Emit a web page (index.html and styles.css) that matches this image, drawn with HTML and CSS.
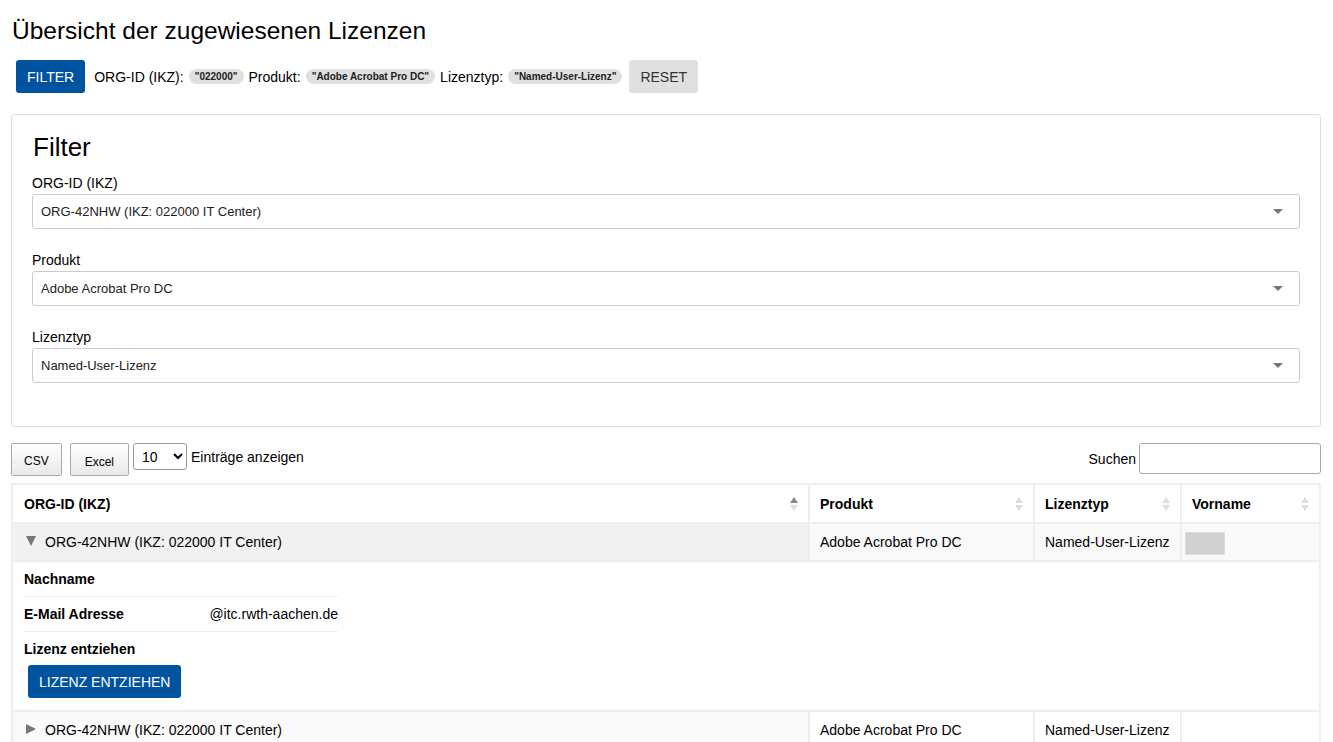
FILE: index.html
```html
<!DOCTYPE html>
<html lang="de">
<head>
    <meta charset="UTF-8">
    <meta name="viewport" content="width=device-width, initial-scale=1.0">
    <title>Übersicht der zugewiesenen Lizenzen</title>
    <link rel="stylesheet" href="styles.css">
</head>
<body>
    <div class="page">
        <h1>Übersicht der zugewiesenen Lizenzen</h1>

        <div class="filter-bar">
            <button class="btn btn-primary">FILTER</button>
            <span class="filter-label">ORG-ID (IKZ):</span>
            <span class="pill">"022000"</span>
            <span class="filter-label">Produkt:</span>
            <span class="pill">"Adobe Acrobat Pro DC"</span>
            <span class="filter-label">Lizenztyp:</span>
            <span class="pill">"Named-User-Lizenz"</span>
            <button class="btn btn-reset">RESET</button>
        </div>

        <div class="card">
            <h2>Filter</h2>
            <div class="form-group">
                <label>ORG-ID (IKZ)</label>
                <div class="select-box">
                    <span>ORG-42NHW (IKZ: 022000 IT Center)</span>
                    <span class="caret"></span>
                </div>
            </div>
            <div class="form-group">
                <label>Produkt</label>
                <div class="select-box">
                    <span>Adobe Acrobat Pro DC</span>
                    <span class="caret"></span>
                </div>
            </div>
            <div class="form-group">
                <label>Lizenztyp</label>
                <div class="select-box">
                    <span>Named-User-Lizenz</span>
                    <span class="caret"></span>
                </div>
            </div>
        </div>

        <div class="toolbar">
            <div class="toolbar-left">
                <button class="dt-button">CSV</button>
                <button class="dt-button">Excel</button>
                <select class="length-select">
                    <option>10</option>
                </select>
                <span class="length-label">Einträge anzeigen</span>
            </div>
            <div class="toolbar-right">
                <span>Suchen</span>
                <input type="text" class="search-input">
            </div>
        </div>

        <table class="licenses">
            <thead>
                <tr>
                    <th class="col-org sort-asc">ORG-ID (IKZ)<span class="sort"></span></th>
                    <th class="col-prod">Produkt<span class="sort"></span></th>
                    <th class="col-type">Lizenztyp<span class="sort"></span></th>
                    <th class="col-name">Vorname<span class="sort"></span></th>
                </tr>
            </thead>
            <tbody>
                <tr class="odd shown">
                    <td class="sorted"><span class="toggle open"></span>ORG-42NHW (IKZ: 022000 IT Center)</td>
                    <td>Adobe Acrobat Pro DC</td>
                    <td>Named-User-Lizenz</td>
                    <td><span class="name-mask"></span></td>
                </tr>
                <tr class="child">
                    <td colspan="4">
                        <table class="details">
                            <tr>
                                <th>Nachname</th>
                                <td></td>
                            </tr>
                            <tr>
                                <th>E-Mail Adresse</th>
                                <td>@itc.rwth-aachen.de</td>
                            </tr>
                            <tr class="last">
                                <th colspan="2">Lizenz entziehen</th>
                            </tr>
                        </table>
                        <button class="btn btn-primary btn-revoke">LIZENZ ENTZIEHEN</button>
                    </td>
                </tr>
                <tr class="even">
                    <td class="sorted"><span class="toggle"></span>ORG-42NHW (IKZ: 022000 IT Center)</td>
                    <td>Adobe Acrobat Pro DC</td>
                    <td>Named-User-Lizenz</td>
                    <td></td>
                </tr>
            </tbody>
        </table>
    </div>
</body>
</html>
```

FILE: styles.css
```css
body {
    margin: 0;
    font-family: 'Liberation Sans', Arial, sans-serif;
    font-size: 14px;
    color: #000;
    background: #fff;
}
.page {
    padding: 0 12px 0 11px;
}
h1 {
    font-size: 24.5px;
    font-weight: normal;
    margin: 17px 0 15px 1px;
    line-height: 28px;
}
.filter-bar {
    display: flex;
    align-items: center;
    gap: 5px;
    margin-left: 5px;
}
.btn {
    font-family: 'Liberation Sans', Arial, sans-serif;
    font-size: 14px;
    height: 33px;
    border: none;
    border-radius: 3px;
    padding: 0 11px;
    cursor: pointer;
}
.btn-primary {
    background: #00549f;
    color: #fff;
}
.btn-reset {
    background: #e0e0e0;
    color: #333;
    margin-left: 2px;
}
.filter-bar .btn-primary {
    margin-right: 4px;
}
.filter-label {
    font-size: 14px;
}
.pill {
    background: #e0e0e0;
    border-radius: 8px;
    padding: 2px 6px;
    font-size: 10px;
    font-weight: bold;
    color: #222;
}
.card {
    margin-top: 21px;
    border: 1px solid #ddd;
    border-radius: 3px;
    padding: 17px 20px 20px 20px;
}
h2 {
    font-size: 26px;
    font-weight: normal;
    line-height: 30px;
    margin: 0 0 13px 1px;
}
.form-group {
    display: flex;
    flex-direction: column;
    gap: 3px;
    margin-bottom: 23px;
}
.form-group label {
    line-height: 16px;
}
.select-box {
    height: 35px;
    box-sizing: border-box;
    border: 1px solid #ccc;
    border-radius: 3px;
    display: flex;
    align-items: center;
    justify-content: space-between;
    padding: 0 16px 0 8px;
    font-size: 13px;
    color: #222;
}
.caret {
    width: 0;
    height: 0;
    border-left: 5px solid transparent;
    border-right: 5px solid transparent;
    border-top: 5px solid #777;
}
.toolbar {
    margin-top: 16px;
    display: flex;
    justify-content: space-between;
    align-items: flex-start;
}
.toolbar-left {
    display: flex;
    align-items: flex-start;
}
.dt-button {
    height: 33px;
    padding: 0 12px;
    margin-right: 8px;
    font-family: 'Liberation Sans', Arial, sans-serif;
    font-size: 12px;
    color: #000;
    border: 1px solid #aaa;
    border-radius: 2px;
    background: linear-gradient(#fff, #e9e9e9);
    padding-top: 2px;
}
.dt-button + .dt-button {
    padding: 4px 14px 0;
}
.length-select {
    margin-left: -4px;
    height: 27px;
    width: 54px;
    font-family: 'Liberation Sans', Arial, sans-serif;
    font-size: 14px;
    border: 1px solid #999;
    border-radius: 3px;
    padding: 0 4px;
    background: #fff;
}
.length-label {
    margin-left: 4px;
    line-height: 28px;
}
.toolbar-right {
    display: flex;
    align-items: center;
    gap: 3px;
}
.search-input {
    width: 182px;
    height: 31px;
    box-sizing: border-box;
    border: 1px solid #aaa;
    border-radius: 3px;
    margin: 0;
}
.licenses {
    margin-top: 7px;
    width: 100%;
    border-collapse: collapse;
    border: 2px solid #eee;
}
.licenses > thead > tr > th,
.licenses > tbody > tr > td {
    border: 2px solid #eee;
    text-align: left;
    white-space: nowrap;
}
.licenses > thead > tr > th {
    position: relative;
    height: 37px;
    padding: 0 10px;
    font-weight: bold;
}
.col-org { width: 774px; }
.col-prod { width: 203px; }
.col-type { width: 125px; }
.licenses > tbody > tr > td {
    height: 36px;
    padding: 0 10px;
    border-top-color: #ddd;
}
.licenses th.col-org,
.licenses td.sorted {
    padding-left: 11px;
}
.sort {
    position: absolute;
    right: 10px;
    top: 12px;
    width: 8px;
    height: 16px;
}
.sort::before,
.sort::after {
    content: '';
    position: absolute;
    left: 0;
    border-left: 4px solid transparent;
    border-right: 4px solid transparent;
}
.sort::before {
    top: 0;
    border-bottom: 6px solid #ddd;
}
.sort::after {
    top: 8px;
    border-top: 6px solid #ddd;
}
.sort-asc .sort::before {
    border-bottom-color: #888;
}
.odd td {
    background: #f9f9f9;
}
.odd td.sorted {
    background: #f1f1f1;
}
.even td.sorted {
    background: #fafafa;
}
.toggle {
    display: inline-block;
    width: 0;
    height: 0;
    margin: 0 9px 0 2px;
    vertical-align: 1px;
    border-left: 5px solid transparent;
    border-right: 5px solid transparent;
    border-top: 10px solid #777;
}
.toggle:not(.open) {
    border-top: 5px solid transparent;
    border-bottom: 5px solid transparent;
    border-left: 10px solid #777;
    border-right: none;
}
.name-mask {
    display: inline-block;
    width: 38px;
    height: 21px;
    margin-left: -7px;
    margin-top: 3px;
    background: #d1d1d1;
    border: 1px solid #ddd;
    vertical-align: middle;
}
.licenses > tbody > tr.child > td {
    height: auto;
    padding: 0 11px 12px 11px;
    background: #fff;
}
.details {
    border-collapse: collapse;
    width: 314px;
}
.details th,
.details td {
    height: 34px;
    padding: 0;
    text-align: left;
    white-space: nowrap;
    border-bottom: 1px solid #eee;
}
.details th {
    width: 186px;
    font-weight: bold;
}
.details tr.last th {
    border-bottom: none;
    height: 33px;
}
.btn-revoke {
    margin: 0 0 0 4px;
    padding: 0 11px;
}
```
